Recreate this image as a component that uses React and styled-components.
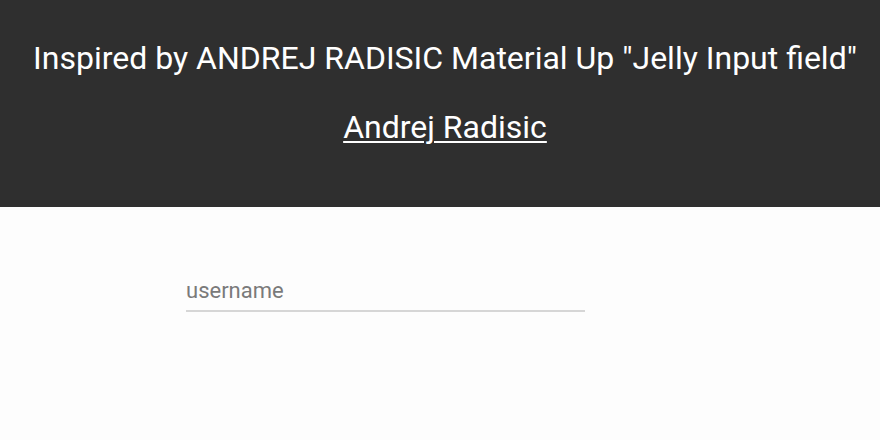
import React from "react";
import styled, { createGlobalStyle } from "styled-components";

const GlobalStyle = createGlobalStyle`
  html, body {
    margin: 0;
    padding: 0;
    background: #fdfdfd;
    font-family: Roboto, "Liberation Sans", sans-serif;
  }
`;

const Header = styled.header`
  height: 207px;
  background: #2f2f2f;
  color: #ffffff;
  display: flex;
  flex-direction: column;
  align-items: center;
  padding-top: 36px;
  padding-left: 10px;
  box-sizing: border-box;
`;

const Title = styled.h1`
  margin: 0;
  font-size: 32px;
  font-weight: 400;
  line-height: 44px;
  white-space: nowrap;
`;

const Credit = styled.a`
  margin-top: 25px;
  font-size: 32px;
  line-height: 44px;
  color: #ffffff;
  text-decoration: underline;
  text-decoration-thickness: 2px;
  text-underline-offset: 3px;
`;

const Form = styled.main`
  padding: 69px 0 0 186px;
`;

const Field = styled.input`
  display: block;
  width: 399px;
  height: 36px;
  box-sizing: border-box;
  border: none;
  border-bottom: 2px solid #d6d6d6;
  background: transparent;
  padding: 0 0 5px 0;
  font-family: Roboto, "Liberation Sans", sans-serif;
  font-size: 22px;
  color: #333;
  outline: none;

  &::placeholder {
    color: #7a7a7a;
  }
`;

export default function App() {
  return (
    <>
      <GlobalStyle />
      <Header>
        <Title>Inspired by ANDREJ RADISIC Material Up "Jelly Input field"</Title>
        <Credit href="#">Andrej Radisic</Credit>
      </Header>
      <Form>
        <Field placeholder="username" />
      </Form>
    </>
  );
}
